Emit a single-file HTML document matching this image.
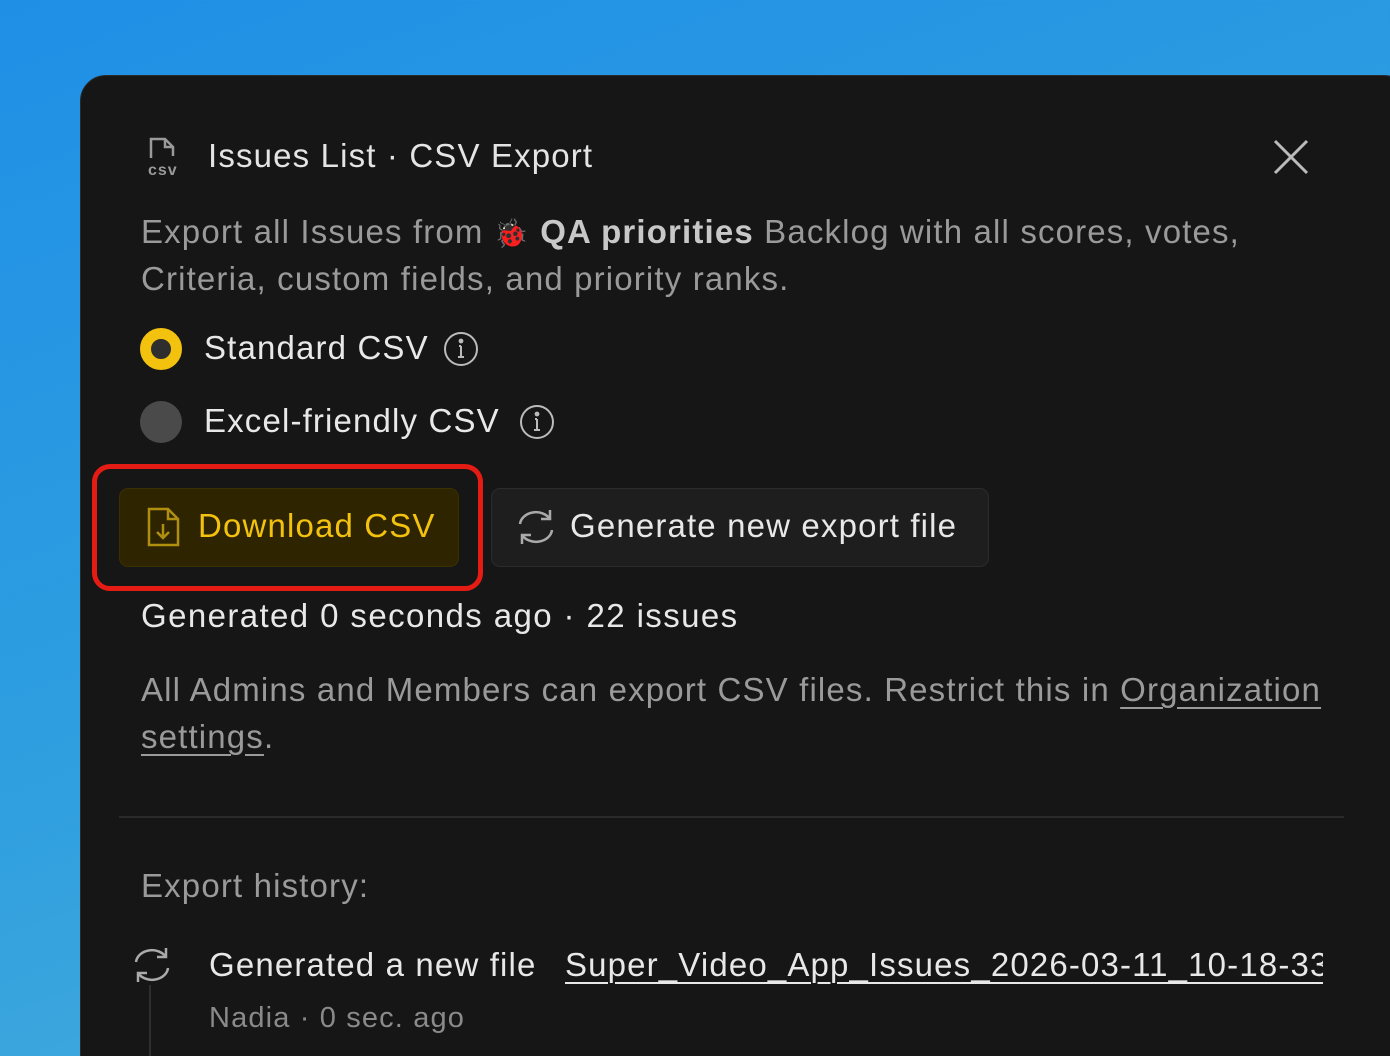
<!DOCTYPE html>
<html><head><meta charset="utf-8"><style>
*{margin:0;padding:0;box-sizing:border-box}
html,body{width:1390px;height:1056px;overflow:hidden}
body{background:linear-gradient(160deg,#1f8fe6 0%,#2f9fe0 50%,#4fb0d8 100%);font-family:"Liberation Sans",sans-serif;position:relative}
.panel{position:absolute;left:80px;top:75px;width:1330px;height:1000px;background:#161616;border-radius:26px 26px 0 0;border:1px solid #2a2a2a}
.t{position:absolute;white-space:nowrap;font-size:33px;color:#e8e8e8;letter-spacing:1.15px}
.g{color:#9a9a9a}
.u{text-decoration:underline;text-underline-offset:6px;text-decoration-thickness:2px}
</style></head><body>
<div class="panel"></div>
<svg style="position:absolute;left:146px;top:136px" width="42" height="42" viewBox="0 0 42 42" fill="none" stroke="#9a9a9a" stroke-width="2.5"><path d="M5 22V3h14l8 8v9"/><path d="M19 3v8h8"/><text x="2" y="39" font-family="Liberation Sans" font-weight="bold" font-size="16" letter-spacing="1" fill="#9a9a9a" stroke="none">csv</text></svg>
<div class="t" style="left:208px;top:137px;color:#e4e4e4">Issues List · CSV Export</div>
<svg style="position:absolute;left:1273px;top:139px" width="36" height="36" stroke="#bbb" stroke-width="3"><path d="M2 2L34 34M34 2L2 34"/></svg>
<div class="t g" style="left:141px;top:213px">Export all Issues from <span style="font-size:28px">🐞</span> <b style="color:#c8c8c8">QA priorities</b> Backlog with all scores, votes,</div>
<div class="t g" style="left:141px;top:260px">Criteria, custom fields, and priority ranks.</div>
<div style="position:absolute;left:140px;top:328px;width:42px;height:42px;border-radius:50%;background:#2e2e2e;border:11px solid #f2c20f"></div>
<div class="t" style="left:204px;top:329px">Standard CSV</div>
<svg style="position:absolute;left:443px;top:331px" width="36" height="36" fill="none" stroke="#bbb" stroke-width="2"><circle cx="18" cy="18" r="16"/><path d="M18 15v11M16 15h2M15 26h6"/><circle cx="18" cy="10" r="1.4" fill="#bbb"/></svg>
<div style="position:absolute;left:140px;top:401px;width:42px;height:42px;border-radius:50%;background:#4a4a4a"></div>
<div class="t" style="left:204px;top:402px">Excel-friendly CSV</div>
<svg style="position:absolute;left:519px;top:404px" width="36" height="36" fill="none" stroke="#bbb" stroke-width="2"><circle cx="18" cy="18" r="16"/><path d="M18 15v11M16 15h2M15 26h6"/><circle cx="18" cy="10" r="1.4" fill="#bbb"/></svg>
<div style="position:absolute;left:92px;top:464px;width:391px;height:127px;border:5px solid #e41c14;border-radius:18px"></div>
<div style="position:absolute;left:119px;top:488px;width:340px;height:79px;background:#2e2500;border:1px solid #3a3000;border-radius:9px"></div>
<svg style="position:absolute;left:146px;top:507px" width="36" height="40" fill="none" stroke="#b08f10" stroke-width="2.5"><path d="M3 2h19l10 10v26H3z"/><path d="M22 2v10h10"/><path d="M17 17v14M11 25l6 6 6-6"/></svg>
<div class="t" style="left:198px;top:507px;color:#f2c20f">Download CSV</div>
<div style="position:absolute;left:491px;top:488px;width:498px;height:79px;background:#1e1e1e;border:1px solid #2c2c2c;border-radius:9px"></div>
<svg style="position:absolute;left:514px;top:507px" width="44" height="40" fill="none" stroke="#aaa" stroke-width="2.5"><path d="M6 17A16 13 0 0 1 36 12"/><path d="M36 3v9h-9"/><path d="M38 23A16 13 0 0 1 8 28"/><path d="M8 37v-9h9"/></svg>
<div class="t" style="left:570px;top:507px">Generate new export file</div>
<div class="t" style="left:141px;top:597px;color:#e8e8e8;letter-spacing:1.4px">Generated 0 seconds ago · 22 issues</div>
<div class="t g" style="left:141px;top:671px">All Admins and Members can export CSV files. Restrict this in <span class="u">Organization</span></div>
<div class="t g" style="left:141px;top:718px"><span class="u">settings</span>.</div>
<div style="position:absolute;left:119px;top:816px;width:1225px;height:2px;background:#2a2a2a"></div>
<div class="t g" style="left:141px;top:867px">Export history:</div>
<div style="position:absolute;left:149px;top:985px;width:2px;height:71px;background:#2e2e2e"></div>
<svg style="position:absolute;left:130px;top:945px" width="44" height="40" fill="none" stroke="#aaa" stroke-width="2.5"><path d="M6 17A16 13 0 0 1 36 12"/><path d="M36 3v9h-9"/><path d="M38 23A16 13 0 0 1 8 28"/><path d="M8 37v-9h9"/></svg>
<div class="t" style="left:209px;top:946px">Generated a new file</div>
<div style="position:absolute;left:565px;top:940px;width:758px;height:52px;overflow:hidden"><div class="t u" style="left:0;top:6px">Super_Video_App_Issues_2026-03-11_10-18-33.csv</div></div>
<div class="t g" style="left:209px;top:1002px;font-size:29px;color:#8a8a8a">Nadia · 0 sec. ago</div>
</body></html>
